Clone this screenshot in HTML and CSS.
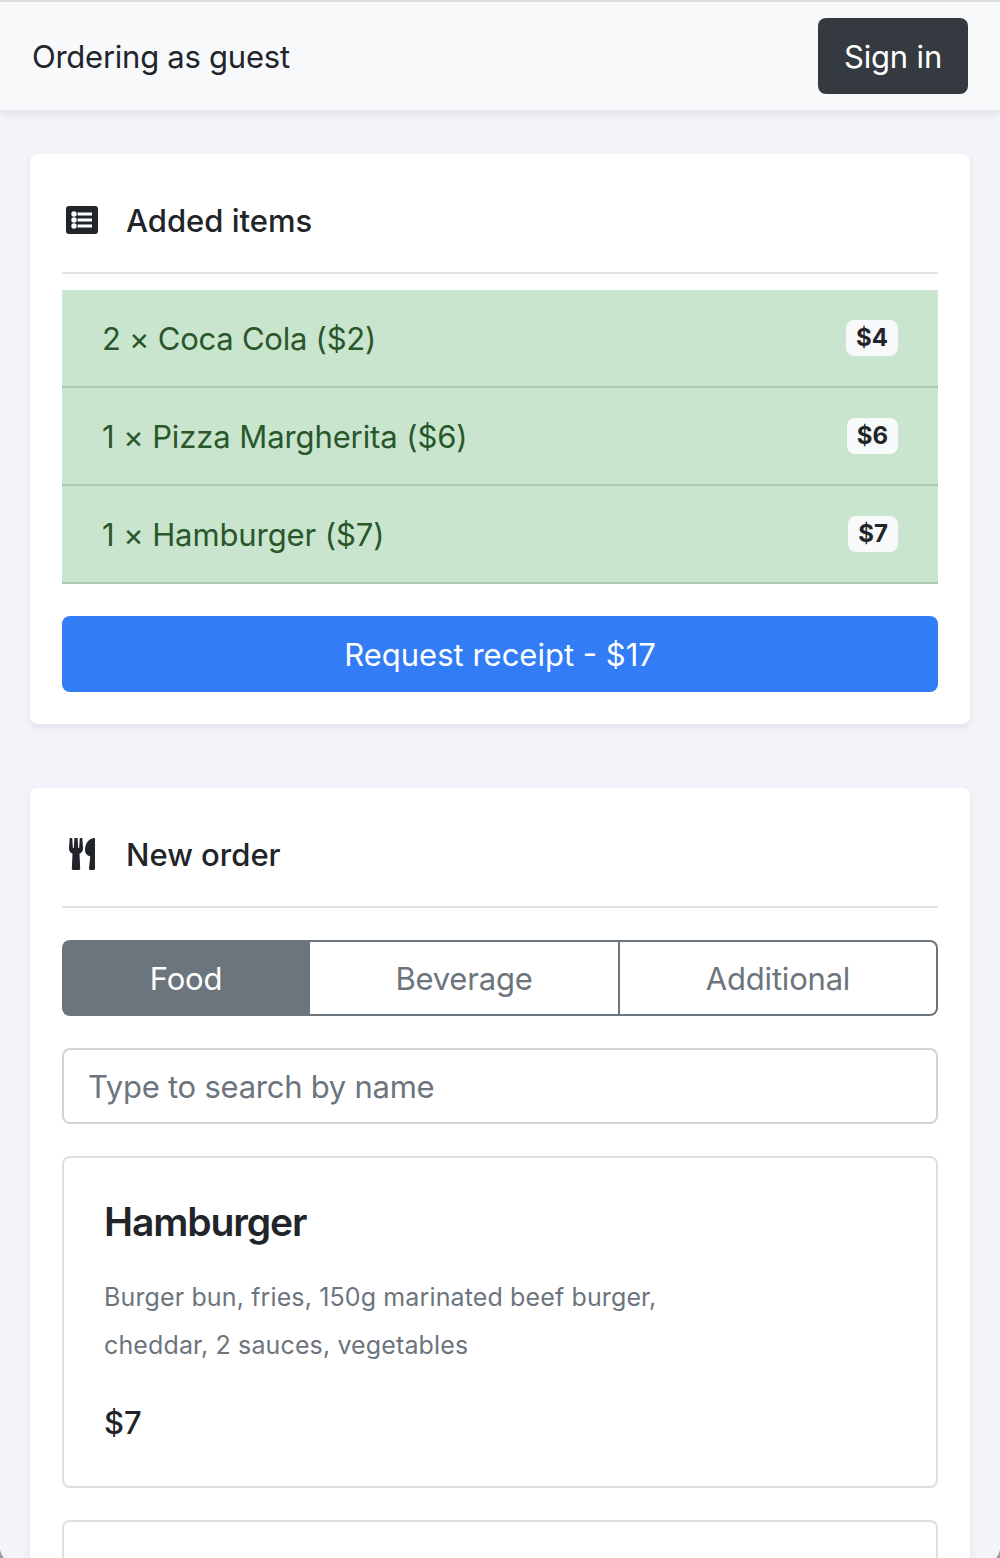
FILE: index.html
```html
<!DOCTYPE html>
<html lang="en">
<head>
<meta charset="utf-8">
<title>Order</title>
<link rel="stylesheet" href="styles.css">
</head>
<body>
<header class="navbar">
  <span class="navbar-text">Ordering as guest</span>
  <button class="btn btn-dark">Sign in</button>
</header>
<main class="content">
  <section class="card">
    <h2 class="card-title">
      <svg class="icon" viewBox="0 0 40 32"><rect x="4" y="2" width="32" height="28" rx="3" fill="#212529"/><g fill="#fff"><circle cx="12" cy="10" r="2.700"/><circle cx="12" cy="16" r="2.700"/><circle cx="12" cy="22" r="2.700"/><path d="M15.600 8.500H30v3H15.600zM15.600 14.500H30v3H15.600zM15.600 20.500H30v3H15.600z"/></g></svg>
      <span>Added items</span>
    </h2>
    <ul class="items">
      <li class="item"><span class="item-name item-name-tight">2 × Coca Cola ($2)</span><span class="badge">$4</span></li>
      <li class="item"><span class="item-name">1 × Pizza Margherita ($6)</span><span class="badge">$6</span></li>
      <li class="item"><span class="item-name">1 × Hamburger ($7)</span><span class="badge">$7</span></li>
    </ul>
    <button class="btn btn-primary">Request receipt - $17</button>
  </section>
  <section class="card card-order">
    <h2 class="card-title">
      <svg class="icon" viewBox="0 0 40 32"><g fill="#212529"><path d="M7.700 0H10.200l.7 10h.9L12.400 0h3.200l.6 10h.9L17.800 0h2.500l.7 10c.2 2.800-1.200 4.700-3.500 5.700L18.200 30.500c0 .9-.7 1.500-1.500 1.500h-5.400c-.8 0-1.500-.6-1.500-1.500l.7-14.800C8.200 14.700 6.800 12.800 7 10z"/><path d="M33 0v30.500c0 .9-.6 1.500-1.500 1.500h-3c-.9 0-1.600-.6-1.500-1.500L28.200 18.500C25 17.500 23 15.500 23 12.500 23 5 27 0 33 0z"/></g></svg>
      <span>New order</span>
    </h2>
    <div class="tabs">
      <button class="tab tab-food active">Food</button>
      <button class="tab tab-beverage">Beverage</button>
      <button class="tab tab-additional">Additional</button>
    </div>
    <input class="search" type="text" placeholder="Type to search by name">
    <article class="product">
      <h3 class="product-name">Hamburger</h3>
      <p class="product-text">Burger bun, fries, 150g marinated beef burger,<br>cheddar, 2 sauces, vegetables</p>
      <p class="product-price">$7</p>
    </article>
    <article class="product product-next"></article>
  </section>
</main>
<svg class="corner corner-left" viewBox="0 0 4 8"><path d="M0 0Q1 5 4 8H0z"/></svg>
<svg class="corner corner-right" viewBox="0 0 4 8"><path d="M4 0Q3 5 0 8H4z"/></svg>
</body>
</html>
```
FILE: styles.css
```css
* { box-sizing: border-box; }
html { height: 100%; }
body {
  display: flex;
  flex-direction: column;
  margin: 0;
  height: 100%;
  background: #f3f4f9;
  color: #212529;
  font: 420 31px/48px Inter, "Liberation Sans", sans-serif;
}
button, input { font: inherit; margin: 0; }
.navbar {
  display: flex;
  flex: none;
  align-items: center;
  justify-content: space-between;
  height: 110px;
  padding: 0 32px;
  border-top: 2px solid #dadbdd;
  background: #f8f9fb;
  box-shadow: 0 4px 8px rgba(0, 0, 0, .075);
}
.navbar-text { padding-top: 2px; letter-spacing: -.25px; }
.btn {
  height: 76px;
  padding: 2px 26px 0;
  border: 0;
  border-radius: 8px;
  color: #fff;
  white-space: nowrap;
}
.btn-dark { width: 150px; padding: 2px 0 0; background: #343a40; letter-spacing: -.15px; }
.content {
  display: flex;
  flex: 1;
  flex-direction: column;
  gap: 64px;
  min-height: 0;
  padding: 44px 30px 0;
}
.card {
  flex: none;
  height: 570px;
  padding: 32px;
  border-radius: 8px;
  background: #fff;
  box-shadow: 0 4px 8px rgba(0, 0, 0, .075);
}
.card-order {
  display: flex;
  flex: 1;
  flex-direction: column;
  height: auto;
  min-height: 0;
  padding-bottom: 0;
  border-radius: 8px 8px 0 0;
}
.card-title {
  display: flex;
  flex: none;
  align-items: center;
  gap: 24px;
  height: 88px;
  margin: 0 0 16px;
  padding-bottom: 18px;
  border-bottom: 2px solid #dee2e6;
  font-size: 31px;
  font-weight: 520;
}
.card-title span { padding-top: 2px; }
.card-order .card-title { margin-bottom: 32px; }
.icon { width: 40px; height: 32px; }
.items { list-style: none; margin: 0 0 32px; padding: 0; }
.item {
  display: flex;
  align-items: center;
  justify-content: space-between;
  height: 98px;
  padding: 0 40px;
  background: #c9e5cd;
  border-bottom: 2px solid #b1c9b4;
  color: #29572b;
}
.item-name { padding-top: 2px; letter-spacing: -.1px; }
.item-name-tight { letter-spacing: -.25px; }
.badge {
  height: 36px;
  padding: 0 10px;
  border-radius: 8px;
  background: #f8f9fb;
  color: #212529;
  font-size: 24px;
  font-weight: 700;
  line-height: 36px;
}
.btn-primary { width: 100%; background: #327cf6; }
.tabs {
  display: flex;
  flex: none;
  gap: 2px;
  height: 76px;
  margin-bottom: 32px;
  padding: 2px;
  border-radius: 8px;
  background: #6c757d;
}
.tab {
  border: 0;
  padding: 2px 0 0;
  background: #fff;
  color: #6c757d;
  letter-spacing: -.2px;
}
.tab-food { width: 244px; }
.tab-beverage { width: 308px; }
.tab-additional { flex: 1; border-radius: 0 6px 6px 0; }
.tab.active { background: #6c757d; color: #fff; }
.search {
  display: block;
  flex: none;
  width: 100%;
  height: 76px;
  margin-bottom: 32px;
  padding: 1px 24px 0;
  border: 2px solid #ced4da;
  border-radius: 8px;
  letter-spacing: -.25px;
}
.search::placeholder { color: #6c757d; opacity: 1; }
.product {
  flex: none;
  height: 332px;
  margin-bottom: 32px;
  padding: 40px;
  border: 2px solid #dfdfdf;
  border-radius: 8px;
}
.product-next {
  flex: 1;
  height: auto;
  min-height: 0;
  margin-bottom: 0;
  padding: 0;
  border-bottom: 0;
  border-radius: 8px 8px 0 0;
}
.product-name {
  margin: 0 0 27px;
  font-size: 39px;
  font-weight: 580;
  line-height: 48px;
  letter-spacing: -1.1px;
}
.product-text {
  margin: 0 0 30px;
  color: #6c757d;
  font-size: 25px;
  line-height: 48px;
  letter-spacing: .13px;
}
.product-price { margin: 0; font-weight: 500; }
.corner { position: fixed; bottom: 0; width: 4px; height: 8px; fill: #98989b; }
.corner-left { left: 0; }
.corner-right { right: 0; }
```
